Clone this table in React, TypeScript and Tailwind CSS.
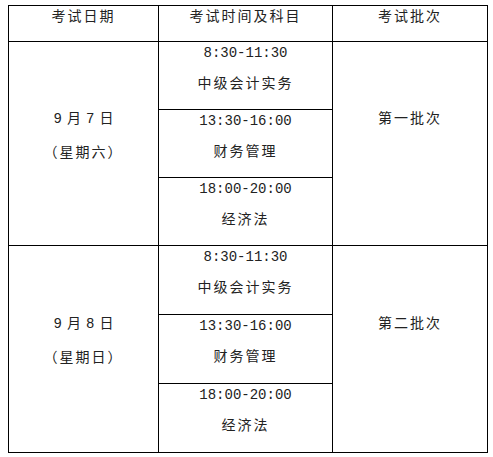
const font = "[font-family:'Liberation_Mono','Noto_Sans_CJK_SC',monospace]"

type Slot = { time: string; subject: string }

const groups: { date: string; week: string; batch: string; rowH: string; slots: Slot[] }[] = [
  {
    date: '9月7日',
    week: '（星期六）',
    batch: '第一批次',
    rowH: 'h-[68px]',
    slots: [
      { time: '8:30-11:30', subject: '中级会计实务' },
      { time: '13:30-16:00', subject: '财务管理' },
      { time: '18:00-20:00', subject: '经济法' },
    ],
  },
  {
    date: '9月8日',
    week: '（星期日）',
    batch: '第二批次',
    rowH: 'h-[69px]',
    slots: [
      { time: '8:30-11:30', subject: '中级会计实务' },
      { time: '13:30-16:00', subject: '财务管理' },
      { time: '18:00-20:00', subject: '经济法' },
    ],
  },
]

function SlotCell({ slot }: { slot: Slot }) {
  return (
    <td className="border border-black p-0 align-top text-center">
      <div className="leading-[22px] text-[14px]">{slot.time}</div>
      <div className="mt-[9px] leading-[22px] text-[14px] tracking-[2px]">{slot.subject}</div>
    </td>
  )
}

export default function App() {
  return (
    <div className={`min-h-[457px] bg-white pt-[5px] pl-[8px] text-[#222] ${font}`}>
      <table className="table-fixed border-collapse w-[479px]">
        <colgroup>
          <col className="w-[150px]" />
          <col className="w-[174px]" />
          <col className="w-[155px]" />
        </colgroup>
        <thead>
          <tr className="h-[36px]">
            <th className="border border-black p-0 align-top font-normal leading-[22px] text-[14px] tracking-[2px]">考试日期</th>
            <th className="border border-black p-0 align-top font-normal leading-[22px] text-[14px] tracking-[2px]">考试时间及科目</th>
            <th className="border border-black p-0 align-top font-normal leading-[22px] text-[14px] tracking-[2px]">考试批次</th>
          </tr>
        </thead>
        <tbody>
          {groups.map((g) =>
            g.slots.map((slot, i) => (
              <tr key={g.date + slot.time} className={g.rowH}>
                {i === 0 && (
                  <td rowSpan={3} className="border border-black p-0 align-middle text-center">
                    <div className="flex flex-col items-center gap-[12px] pb-[16px] leading-[22px] text-[14px]">
                      <span className="tracking-[5px] pl-[5px]">{g.date}</span>
                      <span className="tracking-[2px]">{g.week}</span>
                    </div>
                  </td>
                )}
                <SlotCell slot={slot} />
                {i === 0 && (
                  <td rowSpan={3} className="border border-black p-0 align-middle text-center">
                    <div className="pb-[50px] leading-[22px] text-[14px] tracking-[2px]">{g.batch}</div>
                  </td>
                )}
              </tr>
            ))
          )}
        </tbody>
      </table>
    </div>
  )
}
